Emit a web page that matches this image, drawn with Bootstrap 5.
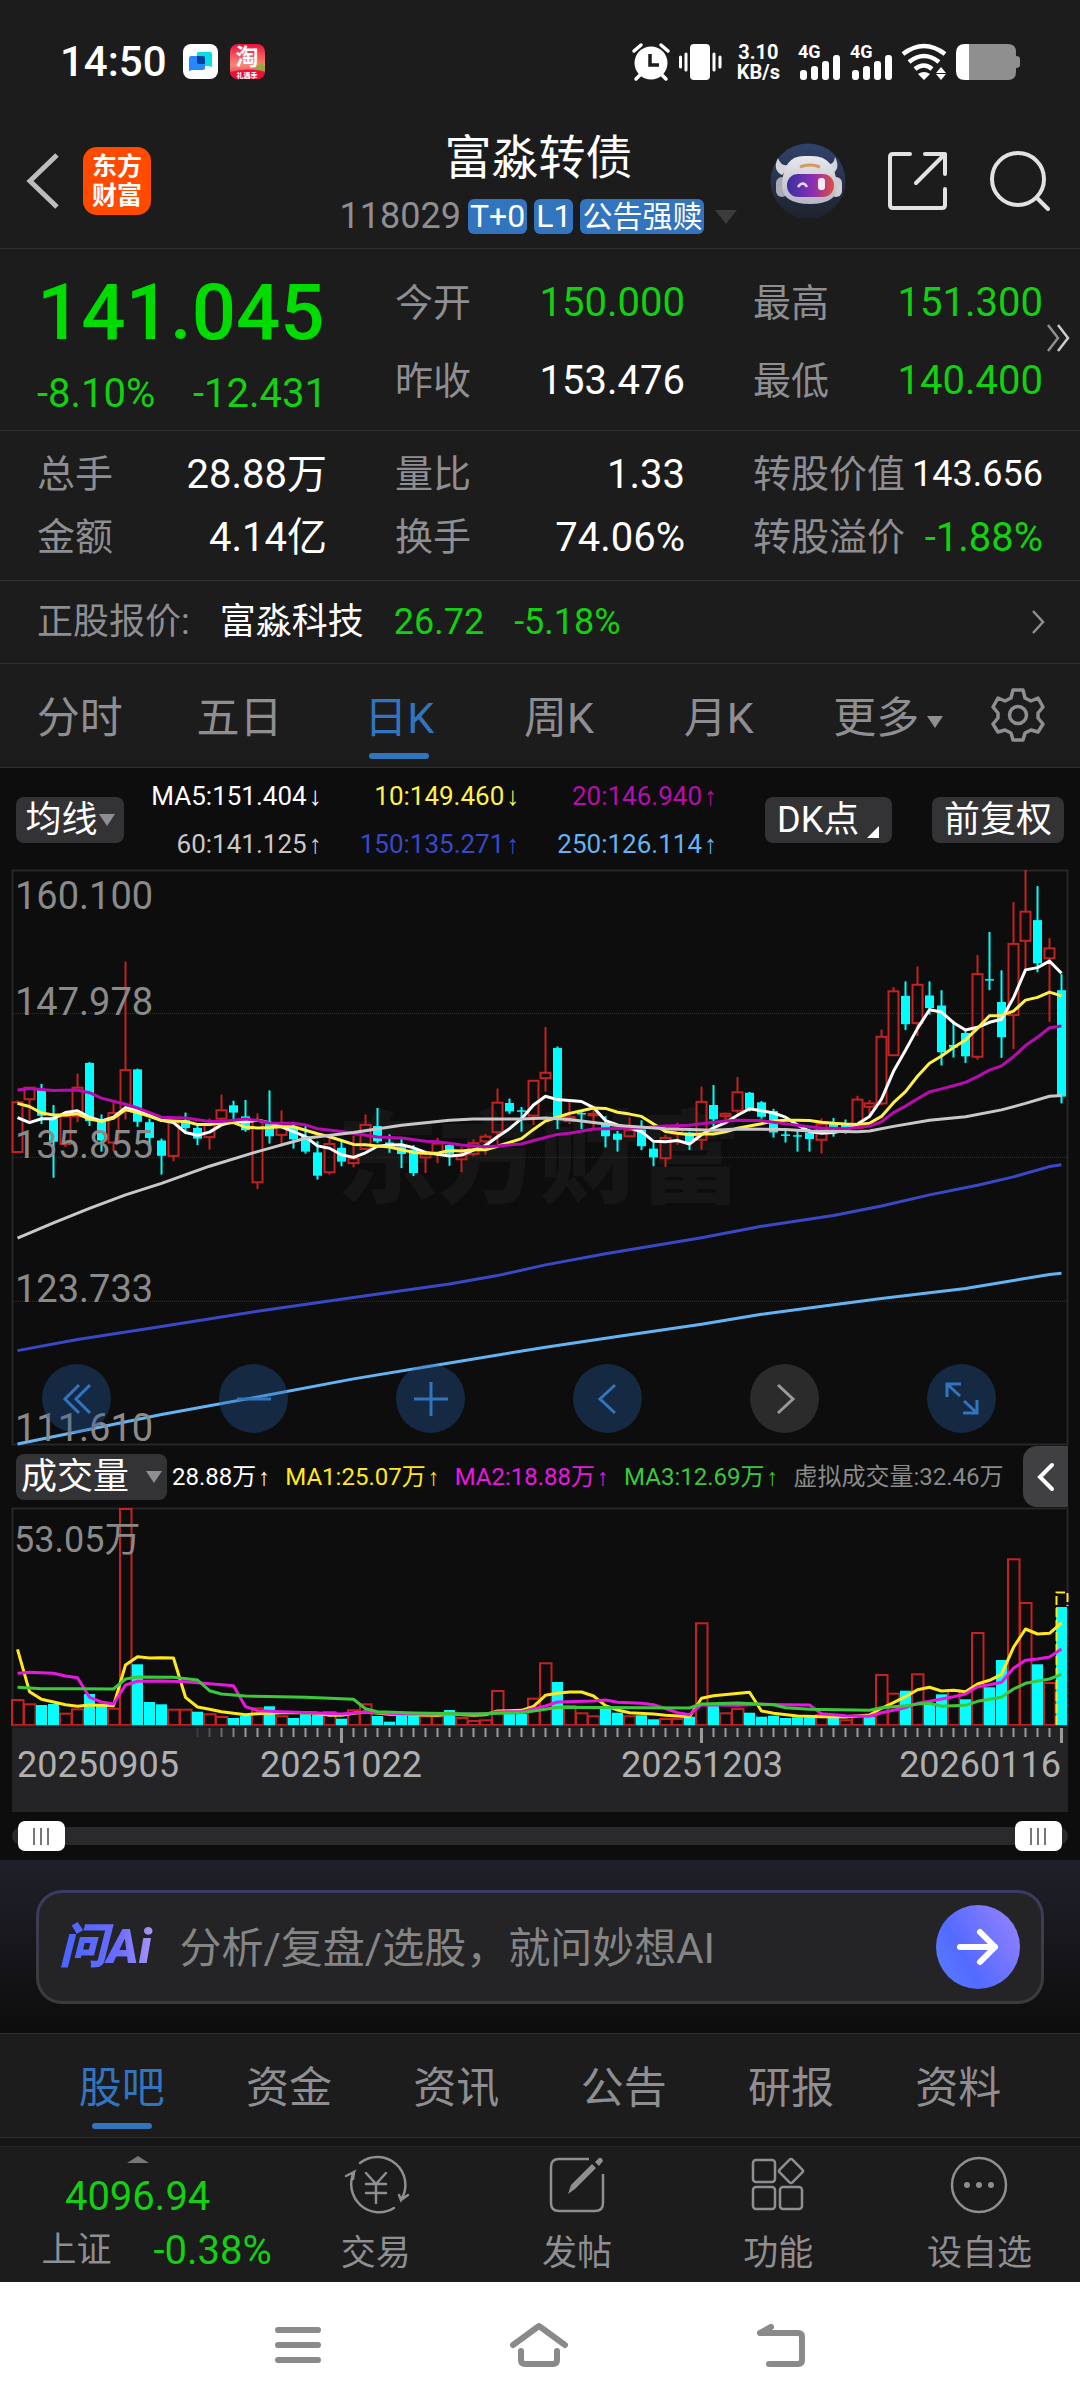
<!DOCTYPE html>
<html lang="zh-CN">
<head>
<meta charset="utf-8">
<meta name="viewport" content="width=device-width, initial-scale=1">
<title>富淼转债 118029</title>
<link href="https://cdn.jsdelivr.net/npm/bootstrap@5.3.0/dist/css/bootstrap.min.css" rel="stylesheet">
<style>
:root{--panel:#1c1c1c;--ink:#0d0d0d;--rule:#2e2e2e;--mute:#8e8e93;--down:#12d012;--blue:#3274be;--chip:#333335}
body{background:var(--panel);color:#fff;font-family:Roboto,"Noto Sans CJK SC",sans-serif;font-size:38px;line-height:60px}
svg{display:block;flex:none;overflow:visible}
a{color:inherit;text-decoration:none}
.btn{--bs-btn-color:#fff;--bs-btn-border-width:0;--bs-btn-padding-x:0;--bs-btn-padding-y:0;--bs-btn-line-height:1;font-family:inherit}
.rule-b{border-bottom:1px solid var(--rule)}
.mute{color:var(--mute)}
.down{color:var(--down)}
.num{font-size:40px}
.fit{font-size:36px}

.sysbar{height:80px;padding:44px 60px 0}
.sysbar .clock{font-size:42px;font-weight:500;line-height:36px}
.sysapps{gap:12px}
.sysicons{gap:10px}
.netrate{font-size:20px;font-weight:700;line-height:20px;text-align:center;padding:0 8px 0 6px}

.apphead{display:grid;grid-template-columns:1fr auto 1fr;padding:48px 30px 14px 27px}
.apphead h1{font-size:47px;line-height:60px;font-weight:400;margin:0 0 11px;text-align:center}
.codeline{font-size:36px;line-height:35px;gap:7px}
.tagbox{background:var(--blue);border-radius:6px;font-size:30px;line-height:35px;padding:0 2px}
.tagbox.latin{font-size:32px}
.brandmark{width:68px;height:68px;border-radius:14px;background:#ff4a00;font-size:25px;font-weight:700;line-height:29px;padding-top:5px;text-align:center}
.headtools{gap:42px}

.quotegrid{display:grid;grid-template-columns:repeat(3,minmax(0,1fr));column-gap:68px;padding:0 37px 0 37px}
.quotegrid>div>div{display:flex;justify-content:space-between;white-space:nowrap}
.q-top{padding-top:15px;padding-bottom:4px;line-height:78px}
.q-more{padding-top:12px;padding-bottom:11px;line-height:63px}
.bigprice{font-size:78px;font-weight:500;line-height:98px;color:#00dc00}
.bigchange{font-size:40px;line-height:64px}
.moreside{right:10px;top:75px}
.under{font-size:36px;line-height:82px;padding:0 36px 0 37px;gap:30px}

.ktabs{display:grid;grid-template-columns:repeat(5,160fr) 180fr 80fr;padding:24px 22px 8px 0}
.tabitem{font-size:43px;line-height:60px;color:var(--mute);text-align:center;padding:0;border:0;background:none}
.tabitem::after{content:"";display:block;width:60px;height:6px;border-radius:3px;margin:5px auto 0}
.tabitem.active{color:var(--blue)}
.tabitem.active::after{background:var(--blue)}
.caret-d{display:inline-block;vertical-align:middle;border:solid transparent;border-width:12px 8px 0;border-top-color:var(--mute)}

.dark{background:var(--ink)}
.malegend{padding:4px 16px 2px;height:102px}
.malist{flex:1;display:grid;grid-template-columns:repeat(3,1fr);font-size:26px;line-height:48px;text-align:right;white-space:nowrap}
.arr{font-family:"Liberation Sans",sans-serif;line-height:1;margin-left:2px}
.c-y{color:#fff04e}.c-p{color:#b80cb0}.c-g{color:#c8c8c8}.c-b{color:#3a48c8}.c-s{color:#64b4f4}
.v-y{color:#ffe81e}.v-m{color:#e818e0}.v-g{color:#3cc83c}.v-n{color:#8a8a8a}
.chipbtn{background:var(--chip)!important;border-radius:8px;height:46px;font-size:36px;white-space:nowrap}
.chipbtn select{appearance:none;background:none;border:0;color:#fff;font:inherit;line-height:46px;padding:0;margin:0;outline:0}
.w-ma{width:108px}.w-vol{width:151px}.w-dk{width:127px}.w-fq{width:132px;margin-left:40px}
.plot{margin:0 12px}
.plot svg.full{width:100%;height:auto}
.floaters{bottom:12px;left:30px;right:72px}
.roundbtn{width:69px;height:69px;border-radius:50%;background:rgba(36,92,160,.36)!important;display:grid;place-items:center}
.roundbtn.off{background:#2b2b2b!important}
.volbar{height:63px;padding-left:16px;margin-right:12px;font-size:24px;white-space:nowrap}
.volbar .vals{gap:15px;padding-left:5px}
.foldbtn{width:45px;height:61px;background:#404042!important;border-radius:14px 0 0 14px}

.rangebox{padding:9px 12px}
.rangewrap{height:30px}
.rangewrap::before{content:"";position:absolute;left:0;right:0;top:6px;height:18px;border-radius:9px;background:#2a2a2c}
.rangewrap input{position:absolute;left:6px;width:calc(100% - 12px);height:30px;margin:0;appearance:none;background:none;pointer-events:none}
.rangewrap input::-webkit-slider-thumb{appearance:none;pointer-events:auto;width:47px;height:30px;border-radius:7px;background:linear-gradient(90deg,transparent 15px,#777 15px 17px,transparent 17px 22px,#777 22px 24px,transparent 24px 29px,#777 29px 31px,transparent 31px) center/100% 17px no-repeat #fff}

.askwrap{background:linear-gradient(#20202a,#0d0d0d);padding:30px 36px 29px}
.askbox{height:114px;border:3px solid transparent;border-radius:26px;background:linear-gradient(#242426,#242426) padding-box,linear-gradient(#3a3c60,#3e3a3a) border-box;padding:0 21px 0 20px}
.asklogo{font-size:48px;font-weight:900;font-style:italic;background:linear-gradient(90deg,#4c66ff 10%,#6a6cff 60%,#b09cf4);-webkit-background-clip:text;background-clip:text;color:transparent;padding-right:6px}
.askbox input{background:none;border:0;outline:0;color:#fff;font-size:42px;min-width:0;flex:1;margin-left:22px;padding:3px 0 0}
.askbox input::placeholder{color:#858585;opacity:1}
.sendbtn{width:84px;height:84px;border-radius:50%;background:linear-gradient(60deg,#5a80ff,#536aff 35%,#8f80ff 90%)!important;display:grid;place-items:center}

.infotabs{padding:24px 38px 8px;border-top:1px solid var(--rule)}
.strip{height:9px;background:#161618;border-bottom:1px solid #262626}
.dock{display:grid;grid-template-columns:minmax(0,275fr) repeat(4,minmax(0,201fr));height:135px;font-size:35px;white-space:nowrap}
.dock a{color:var(--mute);text-align:center;padding-top:6px;line-height:44px}
.dock a svg{margin:0 auto 13px}
.dock .idx{padding-top:9px}
.idx .caret-u{display:block;width:0;margin:0 auto;border:solid transparent;border-width:0 11px 7px;border-bottom-color:#77777b}
.idx .num{line-height:68px}
.idx .pair{line-height:32px;gap:42px;padding-left:38px}
.syskeys{background:#fff;height:126px;padding:0 180px}
</style>
<script src="https://cdn.jsdelivr.net/npm/bootstrap@5.3.0/dist/js/bootstrap.bundle.min.js"></script>
</head>
<body>
<div class="sysbar d-flex align-items-center">
  <span class="clock">14:50</span>
  <div class="sysapps d-flex ms-3">
  <svg width="35" height="36" viewBox="0 0 35 36" aria-hidden="true"><rect width="35" height="35" rx="8" fill="#fff"/><path d="M15 8h12a2 2 0 0 1 2 2v13l-3-1H15a2 2 0 0 1-1-2V10a2 2 0 0 1 1-2z" fill="#05dfe3"/><path d="M8 12h12a2 2 0 0 1 2 2v10a2 2 0 0 1-2 2H9l-3 1V14a2 2 0 0 1 2-2z" fill="#2688ff"/><path d="M14 12h6a2 2 0 0 1 2 2v6h-6a2 2 0 0 1-2-2z" fill="#00409a"/></svg>
  <svg width="35" height="36" viewBox="0 0 35 36" aria-hidden="true"><defs><linearGradient id="tb" x1="0" y1="0" x2="0" y2="1"><stop offset="0" stop-color="#f0103c"/><stop offset=".6" stop-color="#f58a78"/><stop offset="1" stop-color="#ee1440"/></linearGradient></defs><rect width="35" height="35" rx="8" fill="url(#tb)"/><path d="M24 25l8-7 3 5v4z" fill="#8fae3c"/><path d="M0 28q18-5 35 0-1 7-8 7H8q-7 0-8-7z" fill="#e8113c"/><text x="17" y="21" font-size="23" font-weight="700" text-anchor="middle" fill="#fff">淘</text><text x="17" y="34" font-size="7" font-weight="700" text-anchor="middle" fill="#fff">礼遇季</text></svg>
  </div>
  <div class="sysicons ms-auto d-flex align-items-center">
    <svg width="88" height="36" viewBox="0 0 88 36" fill="#fff" aria-hidden="true"><circle cx="18" cy="19" r="16.500"/><path d="M17 10v11h9" stroke="#1c1c1c" stroke-width="3.500" fill="none"/><path d="M1 7l7-6M28 1l7 6M7 31l-4 4M29 31l4 4" stroke="#fff" stroke-width="3.500" stroke-linecap="round"/><rect x="57" y="0" width="20" height="36" rx="4"/><path d="M47.500 13v10M53 10v16M81 10v16M87 13v10" stroke="#fff" stroke-width="3" stroke-linecap="round"/></svg>
    <div class="netrate"><div>3.10</div><div>KB/s</div></div>
    <svg width="42" height="36" viewBox="0 0 42 36" fill="#fff" aria-hidden="true"><text x="0" y="14" font-size="18" font-weight="700">4G</text><rect x="2" y="26" width="7" height="10" rx="3"/><rect x="13" y="22" width="7" height="14" rx="3"/><rect x="24" y="17" width="7" height="19" rx="3"/><rect x="35" y="11" width="7" height="25" rx="3"/></svg>
    <svg width="42" height="36" viewBox="0 0 42 36" fill="#fff" aria-hidden="true"><text x="0" y="14" font-size="18" font-weight="700">4G</text><rect x="2" y="26" width="7" height="10" rx="3"/><rect x="13" y="22" width="7" height="14" rx="3"/><rect x="24" y="17" width="7" height="19" rx="3"/><rect x="35" y="11" width="7" height="25" rx="3"/></svg>
    <svg width="44" height="36" viewBox="0 0 44 36" fill="none" stroke="#fff" stroke-width="4.500" aria-hidden="true"><path d="M1 10Q22-6 43 10M7 18q15-12 30 0M13 25q9-7 17 0"/><path d="M22 36l-6-6q6-4 12 0zM39 23l5 6H34zM39 36l5-6H34z" fill="#fff" stroke="none"/></svg>
    <svg width="64" height="36" viewBox="0 0 64 36" aria-hidden="true"><path d="M12 0h40q8 0 8 8v4q4 0 4 3v6q0 3-4 3v4q0 8-8 8H12z" fill="#8f8f8f"/><path d="M13 0H9Q0 0 0 9v18q0 9 9 9h4z" fill="#fff"/></svg>
  </div>
</div>

<header class="apphead rule-b align-items-center">
  <div class="d-flex align-items-center gap-4">
    <a href="#" aria-label="返回"><svg width="32" height="56" viewBox="0 0 32 56" fill="none" stroke="#bdbdbd" stroke-width="5"><path d="M30 2L3 28l27 26"/></svg></a>
    <a href="#" class="brandmark">东方<br>财富</a>
  </div>
  <div>
    <h1>富淼转债</h1>
    <div class="codeline d-flex align-items-center"><span class="mute">118029</span><span class="tagbox latin">T+0</span><span class="tagbox latin">L1</span><span class="tagbox">公告强赎</span><svg class="ms-1" width="22" height="14" aria-hidden="true"><path d="M0 0h22L11 14z" fill="#3c3c3c"/></svg></div>
  </div>
  <div class="headtools d-flex align-items-center justify-content-end">
    <a href="#" aria-label="AI助手"><svg width="76" height="76" viewBox="0 0 76 76"><defs><linearGradient id="rb" x1="0" y1="0" x2="0" y2="1"><stop offset="0" stop-color="#31426a"/><stop offset="1" stop-color="#1e222c"/></linearGradient><linearGradient id="vz"><stop offset="0" stop-color="#3a2fa0"/><stop offset=".55" stop-color="#8a2fb4"/><stop offset="1" stop-color="#e0503c"/></linearGradient><linearGradient id="hd" x1="0" y1="0" x2="0" y2="1"><stop offset="0" stop-color="#e8e8ee"/><stop offset="1" stop-color="#b8b6c2"/></linearGradient></defs><circle cx="38" cy="38" r="37.500" fill="url(#rb)"/><path d="M8 15Q2 27 12 32L20 22Q11 24 8 15zM65 14q6 12-3 17l-8-9q10 1 11-8z" fill="#d4d4dc"/><rect x="6" y="34" width="12" height="20" rx="6" fill="#a9a9b8"/><rect x="60" y="34" width="12" height="20" rx="6" fill="#cfcdd6"/><path d="M12 42Q13 13 34 13h8q23 0 25 29 1 19-27 19T12 42z" fill="url(#hd)"/><rect x="17" y="31" width="47" height="23" rx="11" fill="url(#vz)"/><path d="M30 24q10-4 20 0" stroke="#d59a60" stroke-width="3" fill="none"/><path d="M28 44q5-7 9 0" stroke="#e6d8ff" stroke-width="2.500" fill="none"/><rect x="48" y="35" width="7" height="12" rx="3" fill="#f4eaff"/></svg></a>
    <a href="#" aria-label="分享"><svg width="60" height="58" viewBox="0 0 60 58" fill="none" stroke="#e2e2e2" stroke-width="4" stroke-linecap="round" stroke-linejoin="round"><path d="M22 2H5q-3 0-3 3v48q0 3 3 3h49q3 0 3-3V37M37 2h20v20M57 2L28 31"/></svg></a>
    <a href="#" aria-label="搜索"><svg width="60" height="60" viewBox="0 0 60 60" fill="none" stroke="#e2e2e2" stroke-width="4" stroke-linecap="round"><circle cx="28" cy="28" r="26"/><path d="M47 47l11 11"/></svg></a>
  </div>
</header>

<section class="position-relative">
  <div class="quotegrid q-top rule-b">
    <div><div class="bigprice">141.045</div><div class="bigchange down"><span>-8.10%</span><span>-12.431</span></div></div>
    <div><div><span class="mute">今开</span><span class="num down">150.000</span></div><div><span class="mute">昨收</span><span class="num">153.476</span></div></div>
    <div><div><span class="mute">最高</span><span class="num down">151.300</span></div><div><span class="mute">最低</span><span class="num down">140.400</span></div></div>
  </div>
  <div class="quotegrid q-more rule-b">
    <div><div><span class="mute">总手</span><span class="num">28.88万</span></div><div><span class="mute">金额</span><span class="num">4.14亿</span></div></div>
    <div><div><span class="mute">量比</span><span class="num">1.33</span></div><div><span class="mute">换手</span><span class="num">74.06%</span></div></div>
    <div><div><span class="mute">转股价值</span><span class="fit">143.656</span></div><div><span class="mute">转股溢价</span><span class="num down">-1.88%</span></div></div>
  </div>
  <a href="#" class="moreside position-absolute" aria-label="更多行情"><svg width="23" height="28" viewBox="0 0 23 28" fill="none" stroke-width="2.500"><path d="M1 1l10 13L1 27" stroke="#8e8e93"/><path d="M11 1l10 13-10 13" stroke="#ccc"/></svg></a>
</section>
<a href="#" class="under rule-b d-flex align-items-center"><span class="mute">正股报价:</span><span>富淼科技</span><span class="down">26.72</span><span class="down">-5.18%</span><svg class="ms-auto" width="12" height="24" viewBox="0 0 12 24" fill="none" stroke="#8e8e93" stroke-width="2.500"><path d="M1 1l10 11L1 23"/></svg></a>

<nav class="ktabs rule-b">
  <button class="tabitem">分时</button><button class="tabitem">五日</button><button class="tabitem active">日K</button><button class="tabitem">周K</button><button class="tabitem">月K</button><button class="tabitem">更多<i class="caret-d ms-2"></i></button>
  <a href="#" class="d-flex justify-content-center align-items-start" aria-label="设置"><svg width="54" height="54" viewBox="0 0 54 54" fill="none" stroke="#8e8e93" stroke-width="3.500" stroke-linejoin="round"><path d="M22 2h10l2 8 6 3 7-3 5 9-5 6v5l5 6-5 8-7-2-6 3-2 7H22l-2-7-6-3-7 2-5-8 5-6v-5l-5-6 5-9 7 3 6-3z"/><circle cx="27" cy="27" r="8.500"/></svg></a>
</nav>

<main class="dark">
  <div class="malegend d-flex align-items-center">
    <label class="chipbtn w-ma d-flex align-items-center justify-content-center"><select aria-label="均线指标"><option>均线</option></select><i class="caret-d"></i></label>
    <div class="malist">
      <span>MA5:151.404<span class="arr">↓</span></span><span class="c-y">10:149.460<span class="arr">↓</span></span><span class="c-p">20:146.940<span class="arr">↑</span></span>
      <span class="c-g">60:141.125<span class="arr">↑</span></span><span class="c-b">150:135.271<span class="arr">↑</span></span><span class="c-s">250:126.114<span class="arr">↑</span></span>
    </div>
    <button class="btn chipbtn w-dk ms-5 px-2 d-flex align-items-center gap-2"><span class="ms-1">DK点</span><svg class="mt-4" width="12" height="12"><path d="M12 0v12H0z" fill="#fff"/></svg></button>
    <button class="btn chipbtn w-fq">前复权</button>
  </div>

  <div class="plot position-relative">
    <svg id="kline" class="full" viewBox="0 0 1056 575" role="img" aria-label="日K线图"></svg>
    <div class="floaters position-absolute d-flex justify-content-between">
      <button class="btn roundbtn" aria-label="最早"><svg width="30" height="32" viewBox="0 0 30 32" fill="none" stroke="#3274be" stroke-width="3"><path d="M17 2L3 16l14 14M28 2L14 16l14 14"/></svg></button>
      <button class="btn roundbtn" aria-label="缩小"><svg width="34" height="32"><path d="M0 16h34" stroke="#3274be" stroke-width="3"/></svg></button>
      <button class="btn roundbtn" aria-label="放大"><svg width="34" height="34"><path d="M0 17h34M17 0v34" stroke="#3274be" stroke-width="3"/></svg></button>
      <button class="btn roundbtn" aria-label="左移"><svg width="22" height="32" viewBox="0 0 22 32" fill="none" stroke="#3274be" stroke-width="3"><path d="M18 2L3 16l15 14"/></svg></button>
      <button class="btn roundbtn off" aria-label="右移"><svg width="22" height="32" viewBox="0 0 22 32" fill="none" stroke="#9a9a9a" stroke-width="3"><path d="M4 2l15 14L4 30"/></svg></button>
      <button class="btn roundbtn" aria-label="全屏"><svg width="34" height="34" viewBox="0 0 34 34" fill="none" stroke="#3274be" stroke-width="3"><path d="M2 15V2h14M2 2l13 12M32 18v13H18M32 31L19 19"/></svg></button>
    </div>
  </div>

  <div class="volbar d-flex align-items-center">
    <label class="chipbtn w-vol d-flex align-items-center justify-content-center gap-3"><select aria-label="副图指标"><option>成交量</option></select><i class="caret-d"></i></label>
    <div class="vals d-flex">
      <span>28.88万<span class="arr">↑</span></span><span class="v-y">MA1:25.07万<span class="arr">↑</span></span><span class="v-m">MA2:18.88万<span class="arr">↑</span></span><span class="v-g">MA3:12.69万<span class="arr">↑</span></span><span class="v-n">虚拟成交量:32.46万</span>
    </div>
    <button class="btn foldbtn ms-auto d-flex align-items-center justify-content-center" aria-label="收起"><svg width="18" height="30" viewBox="0 0 18 30" fill="none" stroke="#fff" stroke-width="4" stroke-linecap="round"><path d="M15 3L3 15l12 12"/></svg></button>
  </div>
  <div class="plot"><svg id="volume" class="full" viewBox="0 0 1056 304" role="img" aria-label="成交量图"></svg></div>

  <div class="rangebox">
    <div class="rangewrap position-relative">
      <input type="range" min="0" max="87" value="0" aria-label="起始日期"><input type="range" min="0" max="87" value="87" aria-label="结束日期">
    </div>
  </div>
</main>

<section class="askwrap">
  <form class="askbox d-flex align-items-center">
    <label for="ask" class="asklogo">问Ai</label>
    <input id="ask" type="text" placeholder="分析/复盘/选股，就问妙想AI">
    <button type="button" class="btn sendbtn" aria-label="发送"><svg width="42" height="38" viewBox="0 0 42 38" fill="none" stroke="#fff" stroke-width="6" stroke-linecap="round" stroke-linejoin="round"><path d="M3 19h35M23 4l15 15-15 15"/></svg></button>
  </form>
</section>

<nav class="infotabs nav nav-fill rule-b">
  <button class="tabitem nav-item active">股吧</button><button class="tabitem nav-item">资金</button><button class="tabitem nav-item">资讯</button><button class="tabitem nav-item">公告</button><button class="tabitem nav-item">研报</button><button class="tabitem nav-item">资料</button>
</nav>
<div class="strip"></div>

<nav class="dock">
  <a href="#" class="idx"><i class="caret-u"></i><div class="num down">4096.94</div><div class="pair d-flex justify-content-center align-items-center"><span>上证</span><span class="num down lh-1">-0.38%</span></div></a>
  <a href="#"><svg width="66" height="66" viewBox="0 0 66 66" fill="none" stroke="#8e8e93" stroke-width="2.500" stroke-linecap="round"><path d="M17 10A28 28 0 0 1 58 47l-2-5M58 47l7-5M51 55A28 28 0 0 1 11 19l-8 4M11 19l-1 7M23 20l10 11 10-11M33 31v19M23 31h20M23 40h20"/></svg>交易</a>
  <a href="#"><svg width="58" height="66" viewBox="0 0 58 66" fill="none" stroke="#8e8e93" stroke-width="2.500"><path d="M41 6H11Q3 6 3 14v36q0 8 8 8h36q8 0 8-8V21"/><path d="M20 41l3-9 21-21 4 4-21 21zM47 9l4-4q3-1 4 3l-4 5z" fill="#8e8e93" stroke="none"/></svg>发帖</a>
  <a href="#"><svg width="54" height="66" viewBox="0 0 54 66" fill="none" stroke="#8e8e93" stroke-width="2.500"><rect x="2" y="7" width="22" height="22" rx="3"/><rect x="2" y="34" width="22" height="22" rx="3"/><rect x="29" y="34" width="22" height="22" rx="3"/><rect x="31" y="9" width="18" height="18" rx="2" transform="rotate(45 40 18)"/></svg>功能</a>
  <a href="#"><svg width="58" height="66" viewBox="0 0 58 66" fill="none" stroke="#8e8e93" stroke-width="2.500"><circle cx="29" cy="32" r="27"/><g fill="#8e8e93" stroke="none"><circle cx="17" cy="32" r="3"/><circle cx="29" cy="32" r="3"/><circle cx="41" cy="32" r="3"/></g></svg>设自选</a>
</nav>

<footer class="syskeys d-flex align-items-center">
  <button class="btn flex-fill d-flex justify-content-center" aria-label="菜单"><svg width="46" height="44" viewBox="0 0 46 44" stroke="#8a8a8a" stroke-width="6" stroke-linecap="round"><path d="M3 7h40M3 22h40M3 37h40"/></svg></button>
  <button class="btn flex-fill d-flex justify-content-center" aria-label="主页"><svg width="58" height="44" viewBox="0 0 58 44" fill="none" stroke="#8a8a8a" stroke-width="6" stroke-linecap="round" stroke-linejoin="round"><path d="M3 22L29 3l26 19M11 28v9q0 4 4 4h28q4 0 4-4v-9"/></svg></button>
  <button class="btn flex-fill d-flex justify-content-center" aria-label="返回"><svg width="48" height="44" viewBox="0 0 48 44" fill="none" stroke="#8a8a8a" stroke-width="6" stroke-linecap="round" stroke-linejoin="round"><path d="M14 4L3 10h38q4 0 4 4v23q0 4-4 4H12"/></svg></button>
</footer>

<script>
// Each candle: high, body top, body bottom, low (1/1500 of plot height, offset 26); "r" rising, "c" falling
const candles = `r628,633,763,763 r595,595,625,690 c585,600,668,690 c640,675,736,830 r670,670,742,750 r558,595,670,685 c528,530,682,695 c665,683,733,762 r632,661,738,760 r265,549,650,678 c545,547,684,697 c676,685,726,770 c728,733,773,822 r682,685,773,787 c660,680,700,712 c688,700,728,745 r675,690,724,757 r613,654,676,690 c629,641,660,680 c627,670,706,710 r662,680,842,860 c602,690,722,741 r654,698,718,748 c690,697,730,754 c690,722,762,767 c735,764,825,835 r725,742,816,822 c730,752,788,800 r720,780,792,803 r665,692,755,757 c648,695,735,740 c717,738,748,765 c729,750,768,805 c745,757,818,826 r763,767,777,818 r726,741,768,792 c742,745,768,799 r750,772,782,816 r730,740,768,774 r716,723,735,770 r597,634,711,742 c623,635,657,663 c645,654,658,710 r575,577,668,692 r436,556,570,605 c487,491,675,703 r632,672,682,690 c657,661,665,703 r642,663,667,700 c669,690,722,751 c708,715,731,762 r672,706,722,724 c680,704,748,758 c738,754,777,800 r718,726,779,802 r686,705,715,744 c710,712,738,758 r592,632,731,757 c588,640,677,695 r660,663,669,685 r567,607,655,662 c606,608,650,657 c630,633,671,676 c650,656,712,725 c700,717,721,738 c705,719,723,762 c702,712,729,762 r675,690,731,767 c674,689,699,723 c678,692,700,715 r616,626,700,703 r627,636,645,672 r443,462,636,640 r332,343,510,512 c317,355,429,444 r278,326,426,460 c317,354,387,404 c340,380,502,537 c420,483,490,516 c446,452,513,530 r248,298,514,522 c188,311,315,340 c288,371,463,517 r110,219,405,494 r26,135,211,290 c68,157,270,293 r204,231,257,423 c298,340,618,636`.split(" ");
// Moving averages, "index:level"
const priceLines = [
 ["#3a48c8","0:1282 5:1253 12:1219 20:1179 28:1143 36:1108 40:1086 44:1058 49:1029 57:987 62:957 68:929 72:904 76:875 80:850 83:828 86:801 87:796"],
 ["#64b4f4","0:1526 5:1494 12:1449 20:1403 28:1356 36:1314 44:1273 50:1245 57:1213 62:1187 68:1162 72:1146 76:1131 79:1120 82:1104 86:1083 87:1080"],
 ["#fff","0:673 1:686 2:676 3:676 4:660 5:655 6:672 7:682 8:672 9:647 10:655 11:667 12:680 13:686 14:712 15:719 16:711 17:692 18:684 19:684 20:680 21:686 22:697 23:710 24:723 25:747 26:753 27:770 28:777 29:765 30:748 31:745 32:744 33:752 34:764 35:769 36:773 37:771 38:758 39:746 40:723 41:702 42:676 43:640 44:617 45:626 46:628 47:631 48:647 49:681 50:692 51:700 52:710 53:735 54:736 55:733 56:742 57:718 58:700 59:686 60:667 61:650 62:655 63:661 64:672 65:692 66:709 67:714 68:712 69:706 70:690 71:670 72:625 73:552 74:497 75:440 76:391 77:397 78:425 79:444 80:437 81:424 82:416 83:360 84:287 85:281 86:264 87:296"],
 ["#fff04e","0:636 1:644 2:661 3:666 4:666 5:663 6:677 7:683 8:675 9:653 10:660 11:670 12:681 13:682 14:683 15:691 16:691 17:687 18:686 19:698 20:700 21:699 22:697 23:697 24:706 25:715 26:723 27:733 28:743 29:744 30:747 31:750 32:757 33:764 34:766 35:766 36:759 37:760 38:757 39:757 40:748 41:738 42:728 43:704 44:682 45:672 46:662 47:655 48:648 49:649 50:659 51:664 52:670 53:690 54:709 55:714 56:718 57:716 58:716 59:710 60:701 61:695 62:689 63:682 64:680 65:680 66:681 67:685 68:688 69:690 70:691 71:688 72:670 73:634 74:605 75:565 76:531 77:512 78:490 79:470 80:440 81:407 82:406 83:395 84:366 85:359 86:345 87:355"],
 ["#b80cb0","0:601 1:597 3:602 5:601 6:608 7:622 9:638 10:648 12:672 14:674 16:683 17:683 19:677 20:680 21:687 23:688 24:692 25:702 27:709 30:724 32:726 34:735 35:736 37:745 39:749 40:747 42:742 43:733 44:725 45:717 46:714 48:703 49:702 52:700 54:695 56:693 57:689 59:682 60:680 62:681 64:689 66:697 67:700 69:702 71:695 72:684 73:660 74:643 75:624 76:606 77:598 78:590 79:581 80:566 81:549 82:538 83:514 84:485 85:463 86:438 87:434"],
 ["#c8c8c8","0:988 3:948 6:910 9:875 12:845 16:800 20:762 24:727 28:712 32:693 36:680 38:677 42:677 44:674 46:678 48:686 50:694 54:702 58:706 60:703 64:704 66:708 70:710 71:708 73:696 76:680 79:671 82:653 84:636 86:617 87:615"]];
const vols = "r777 r790 c795 c792 r818 r805 c762 c797 r803 r204 c673 c786 c793 r806 r806 c815 r820 r828 c834 c828 r802 c799 r826 c834 c823 c824 r813 c836 r808 r790 c828 c845 c826 c824 r826 r826 c810 r831 r840 r838 r750 c820 c822 r773 r667 c726 r795 r817 r826 c805 c818 r826 c826 c838 r834 r834 c830 r547 c797 r817 r804 c818 c830 c827 c834 c832 c832 r822 c832 r838 r824 c830 r702 r758 c752 r700 c790 c763 r748 c778 r576 c742 c660 r355 r486 c673 r726 c501".split(" ");
const volLines = [
 ["#ffe81e","0:628 1:755 2:778 3:786 4:794 5:799 6:795 7:796 8:797 9:675 10:650 11:654 12:653 13:654 14:772 15:801 16:808 17:815 18:820 19:824 20:821 22:818 24:818 25:820 26:826 27:826 28:820 29:816 31:823 35:826 36:822 38:826 39:824 40:813 42:811 43:799 44:766 45:760 46:756 47:756 48:768 49:797 50:810 51:818 53:822 54:826 56:830 57:775 58:767 61:757 62:813 63:820 65:828 67:830 69:831 71:825 72:805 73:788 74:770 75:749 76:742 77:753 78:751 79:755 80:732 81:721 82:703 83:622 84:567 85:582 86:580 87:549"],
 ["#e818e0","0:700 1:697 3:700 4:708 5:713 6:772 7:786 8:792 9:735 10:724 12:723 14:725 16:731 18:737 19:800 20:812 22:815 25:819 27:822 29:816 32:822 39:822 40:816 42:815 43:806 44:798 45:786 48:783 49:780 50:787 52:790 53:794 54:806 55:818 56:824 57:794 60:796 62:793 64:794 66:795 67:821 69:827 71:829 72:818 74:803 75:790 76:784 77:777 78:770 79:762 80:740 81:734 82:727 83:685 84:661 85:657 86:651 87:627"],
 ["#3cc83c","0:742 2:746 5:746 8:747 9:717 10:711 13:712 15:720 16:752 17:762 19:768 24:772 28:778 29:806 30:815 33:819 38:822 42:818 44:808 45:802 56:804 57:792 60:789 63:794 64:803 66:808 71:811 72:803 74:797 75:792 76:790 77:799 79:796 80:784 82:772 83:747 84:730 86:717 87:703"]];
const X = i => 5.5 + 12 * i;
const PY = v => (v - 26) * 574 / 1500;
const VY = v => (v - 204) / 3;
const RED = "#c42222", CYAN = "#00ffff";
const rect = (x, y, w, h, a) => `<rect x="${x}" y="${y.toFixed(1)}" width="${w}" height="${h.toFixed(1)}" ${a}/>`;
const line = (x1, y1, x2, y2, c, a = "") => `<path d="M${x1} ${y1.toFixed(1)}L${x2} ${y2.toFixed(1)}" stroke="${c}" ${a}/>`;
const poly = (set, Y) => set.map(([c, s]) => `<polyline fill="none" stroke="${c}" stroke-width="3" stroke-linejoin="round" points="${s.split(" ").map(p => { const [i, v] = p.split(":"); return X(+i) + "," + Y(+v).toFixed(1); }).join(" ")}"/>`).join("");
const label = (x, y, t, c, s, anchor = "start") => `<text x="${x}" y="${y}" fill="${c}" font-size="${s}" text-anchor="${anchor}">${t}</text>`;

let k = `<text x="527" y="325" font-size="101" font-weight="900" text-anchor="middle" fill="#161616">东方财富</text>`;
k += rect(.5, .5, 1055, 574, 'fill="none" stroke="#262628" stroke-width="2"');
[401, 777, 1153].forEach(v => k += line(0, PY(v), 1056, PY(v), "#303030", 'stroke-dasharray="1 1"'));
candles.forEach((s, i) => {
  const [h, t, b, l] = s.slice(1).split(",").map(n => PY(+n)), x = X(i);
  if (s[0] === "r") k += line(x, h, x, t, RED, 'stroke-width="2"') + line(x, b, x, l, RED, 'stroke-width="2"') + rect(x - 5, t, 10, Math.max(b - t, 1), `fill="none" stroke="${RED}" stroke-width="2"`);
  else k += line(x, h, x, l, CYAN, 'stroke-width="2"') + rect(x - 4.5, t, 9, Math.max(b - t, 1.5), `fill="${CYAN}"`);
});
k += poly(priceLines, PY);
[["160.100", 39], ["147.978", 145], ["135.855", 288], ["123.733", 432], ["111.610", 571]].forEach(([t, y]) => k += label(3, y, t, "#8a8a8a", 38));
document.getElementById("kline").innerHTML = k;

let v = rect(.5, .5, 1055, 218, 'fill="none" stroke="#262628" stroke-width="2"') + rect(0, 220, 1056, 84, 'fill="#242426"');
vols.forEach((s, i) => {
  const t = VY(+s.slice(1)), x = X(i);
  v += s[0] === "r" ? rect(x - 5.5, t + 1, 11.5, 216 - t, `fill="none" stroke="${RED}" stroke-width="2"`) : rect(x - 5.5, t, 11, 217.5 - t, `fill="${CYAN}"`);
});
v += `<path d="M1044.500 217V84.500h11V98" fill="none" stroke="#ffe81e" stroke-width="2" stroke-dasharray="9 3"/>`;
v += line(0, 217.5, 1056, 217.5, "#7a1c1c");
v += poly(volLines, VY);
for (let i = 15; i < 88; i++) {
  const major = i % 30 === 27;
  v += line(X(i), 220, X(i), major ? 235 : 229, "#9a9a9a", `stroke-width="${major ? 3 : 2}" opacity="${Math.min(1, (i - 14) / 5)}"`);
}
v += label(2, 44, "53.05万", "#8a8a8a", 36);
v += label(5, 269, "20250905", "#b0b0b0", 36) + label(329, 269, "20251022", "#b0b0b0", 36, "middle") + label(690, 269, "20251203", "#b0b0b0", 36, "middle") + label(1049, 269, "20260116", "#b0b0b0", 36, "end");
document.getElementById("volume").innerHTML = v;
</script>
</body>
</html>
